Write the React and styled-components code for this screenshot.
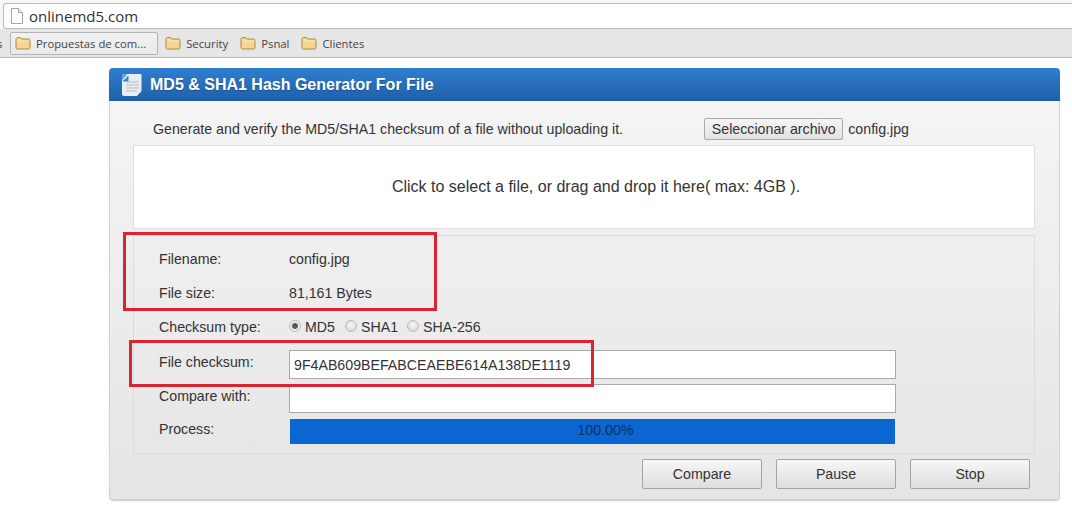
import React from 'react'
import styled, { createGlobalStyle } from 'styled-components'

const GlobalStyle = createGlobalStyle`
  html, body {
    margin: 0;
    padding: 0;
    background: #fff;
  }
  body {
    font-family: "Liberation Sans", Arial, sans-serif;
    font-size: 14.2px;
    color: #333;
  }
`

const bookmarks = [
  { name: 'Propuestas de com...', active: true, after: 6 },
  { name: 'Security', after: 10 },
  { name: 'Psnal', after: 10 },
  { name: 'Clientes', after: 0 },
]

const FolderIcon = () => (
  <svg width="16" height="14" viewBox="0 0 16 14">
    <path d="M1 3.5 C1 2.2 1.6 1.5 2.6 1.5 H5.6 L7 3 H13.6 C14.5 3 15 3.6 15 4.5 V11.5 C15 12.4 14.5 13 13.6 13 H2.4 C1.5 13 1 12.4 1 11.5 Z" fill="#f6d58e" stroke="#a98a4c" strokeWidth="1" />
    <path d="M2 5 H14" stroke="#fbe9c0" strokeWidth="1" />
  </svg>
)

const PageIcon = () => (
  <svg width="12" height="16" viewBox="0 0 12 16">
    <path d="M0.5 0.5 H7.5 L11.5 4.5 V15.5 H0.5 Z" fill="#fff" stroke="#a5a5a5" />
    <path d="M7.5 0.5 V4.5 H11.5" fill="#eee" stroke="#a5a5a5" />
  </svg>
)

const HashIcon = () => (
  <svg width="21" height="24" viewBox="0 0 21 24">
    <path d="M6 1 H19 C20 1 20.5 1.6 20.5 2.5 V18 L16 23 H3 C1.8 23 1 22.2 1 21 V7 Z" fill="#e9eef4" />
    <path d="M6 9 H18 M5 12 H18 M5 15 H18 M5 18 H16" stroke="#c3cad2" strokeWidth="1.4" />
    <path d="M1 1 H6 L1 7 Z" fill="#5fa8e6" />
    <path d="M7 3 V8 H2" fill="#3f86d0" stroke="#3f86d0" />
  </svg>
)

const rows = [
  { label: 'Filename:', value: 'config.jpg' },
  { label: 'File size:', value: '81,161 Bytes' },
]

const App = () => (
  <Page>
    <GlobalStyle />
    <Chrome>
      <AddressBar>
        <PageIcon />
        <Url>onlinemd5.com</Url>
      </AddressBar>
      <BookmarkBar>
        <Clipped>s</Clipped>
        {bookmarks.map((b) => (
          <Bookmark key={b.name} $active={b.active} $after={b.after}>
            <FolderIcon />
            {b.name}
          </Bookmark>
        ))}
      </BookmarkBar>
    </Chrome>

    <Panel>
      <PanelHeader>
        <HashIcon />
        <Title>MD5 &amp; SHA1 Hash Generator For File</Title>
      </PanelHeader>
      <PanelBody>
        <Intro>
          <span>Generate and verify the MD5/SHA1 checksum of a file without uploading it.</span>
          <FilePicker>
            <PickButton type="button">Seleccionar archivo</PickButton>
            config.jpg
          </FilePicker>
        </Intro>
        <DropZone>Click to select a file, or drag and drop it here( max: 4GB ).</DropZone>
        <Details>
          {rows.map((r) => (
            <Row key={r.label}>
              <Label>{r.label}</Label>
              <span>{r.value}</span>
            </Row>
          ))}
          <Row>
            <Label>Checksum type:</Label>
            <Radios>
              <RadioLabel $width={56}><Radio type="radio" name="hash" defaultChecked />MD5</RadioLabel>
              <RadioLabel $width={62}><Radio type="radio" name="hash" />SHA1</RadioLabel>
              <RadioLabel><Radio type="radio" name="hash" />SHA-256</RadioLabel>
            </Radios>
          </Row>
          <Row>
            <Label>File checksum:</Label>
            <TextBox readOnly value="9F4AB609BEFABCEAEBE614A138DE1119" />
          </Row>
          <Row>
            <Label>Compare with:</Label>
            <TextBox readOnly value="" />
          </Row>
          <Row>
            <Label>Process:</Label>
            <Progress>100.00%</Progress>
          </Row>
        </Details>
        <Actions>
          <ActionButton type="button">Compare</ActionButton>
          <ActionButton type="button">Pause</ActionButton>
          <ActionButton type="button">Stop</ActionButton>
        </Actions>
      </PanelBody>
    </Panel>

    <Highlight $left={123} $top={232} $width={314} $height={79} />
    <Highlight $left={129} $top={340} $width={465} $height={47} />
  </Page>
)

export default App

const Page = styled.div`
  position: relative;
  width: 1072px;
  height: 511px;
  overflow: hidden;
  background: #fff;
`

const Chrome = styled.div`
  padding-top: 3px;
  background: #f7f7f7;
`

const AddressBar = styled.div`
  display: flex;
  align-items: center;
  gap: 6px;
  height: 26px;
  margin-left: 3px;
  padding-left: 7px;
  background: #fff;
  border: 1px solid #bdbdbd;
  border-right: 0;
  border-radius: 3px 0 0 3px;
  box-sizing: border-box;
`

const Url = styled.span`
  font-family: "Open Sans", sans-serif;
  font-size: 15px;
  color: #333;
`

const BookmarkBar = styled.div`
  display: flex;
  align-items: center;
  height: 29px;
  background: #e6e6e6;
  border-bottom: 1px solid #b5b5b5;
  box-sizing: border-box;
`

const Clipped = styled.span`
  width: 13px;
  margin-left: -3px;
  font-family: "Open Sans", sans-serif;
  font-size: 11.3px;
  color: #444;
`

const Bookmark = styled.div`
  display: flex;
  align-items: center;
  gap: 5px;
  height: 23px;
  margin-right: ${(p) => p.$after}px;
  padding: ${(p) => (p.$active ? '0 11px 0 4px' : '0')};
  font-family: "Open Sans", sans-serif;
  font-size: 11.3px;
  color: #444;
  white-space: nowrap;
  box-sizing: border-box;
  border: 1px solid ${(p) => (p.$active ? '#b4b4b4' : 'transparent')};
  border-radius: 2px;
  background: ${(p) => (p.$active ? 'linear-gradient(#f2f2f2, #e9e9e9)' : 'none')};
`

const Panel = styled.section`
  width: 951px;
  margin: 10px 0 0 109px;
  border-radius: 4px;
  box-shadow: 0 1px 1px rgba(0, 0, 0, 0.2);
  overflow: hidden;
`

const PanelHeader = styled.header`
  display: flex;
  align-items: center;
  gap: 8px;
  height: 33px;
  padding-left: 12px;
  background: linear-gradient(#2f7fd0, #1f5fa9);
`

const Title = styled.h1`
  margin: 0;
  font-size: 16px;
  font-weight: bold;
  color: #fff;
  text-shadow: 0 1px 1px rgba(0, 0, 0, 0.25);
`

const PanelBody = styled.div`
  padding: 0 24px 10px 23px;
  background: linear-gradient(#f4f4f4, #e5e5e5);
  border: 1px solid #d2d2d2;
  border-top: 0;
  border-radius: 0 0 4px 4px;
`

const Intro = styled.div`
  display: flex;
  align-items: center;
  justify-content: space-between;
  height: 44px;
  padding: 12px 126px 0 20px;
  box-sizing: border-box;
`

const FilePicker = styled.div`
  display: flex;
  align-items: center;
  gap: 5px;
`

const PickButton = styled.button`
  width: 139px;
  height: 22px;
  padding: 0;
  font-family: inherit;
  font-size: 14.2px;
  color: #333;
  background: linear-gradient(#f5f5f5, #e2e2e2);
  border: 1px solid #a9a9a9;
  border-radius: 2px;
`

const DropZone = styled.div`
  display: flex;
  align-items: center;
  justify-content: center;
  height: 84px;
  padding: 0 0 1px 24px;
  box-sizing: border-box;
  background: #fff;
  border: 1px solid #dedede;
  font-size: 16px;
`

const Details = styled.div`
  display: grid;
  grid-auto-rows: 34px;
  margin-top: 6px;
  padding: 6px 0 7px 25px;
  border: 1px solid #dcdcdc;
`

const Row = styled.div`
  display: grid;
  grid-template-columns: 130px 1fr;
  align-items: center;
`

const Label = styled.span`
  color: #333;
`

const Radios = styled.div`
  display: flex;
  align-items: center;
`

const RadioLabel = styled.label`
  display: flex;
  align-items: center;
  width: ${(p) => (p.$width ? `${p.$width}px` : 'auto')};
`

const Radio = styled.input`
  appearance: none;
  width: 12px;
  height: 12px;
  margin: 0 4px 2px 0;
  border: 1px solid #bcbcbc;
  border-radius: 50%;
  background: radial-gradient(circle at 50% 40%, #f6f6f6, #d2d2d2);
  &:checked {
    background: radial-gradient(circle, #5a5a5a 0 2.5px, #eee 3.5px, #ddd 100%);
  }
`

const TextBox = styled.input`
  align-self: start;
  width: 607px;
  height: 29px;
  margin-top: 6px;
  padding: 0 4px;
  box-sizing: border-box;
  font-family: inherit;
  font-size: 14.2px;
  color: #333;
  background: #fff;
  border: 1px solid #a9a9a9;
  outline: none;
`

const Progress = styled.div`
  align-self: start;
  width: 605px;
  height: 25px;
  margin: 7px 0 0 1px;
  padding-left: 26px;
  box-sizing: border-box;
  line-height: 23px;
  text-align: center;
  color: #0e2f5c;
  background: #0966d2;
`

const Actions = styled.div`
  display: flex;
  justify-content: flex-end;
  gap: 14px;
  margin-top: 5px;
  padding-right: 5px;
`

const ActionButton = styled.button`
  width: 120px;
  height: 30px;
  padding: 0;
  font-family: inherit;
  font-size: 14.2px;
  color: #333;
  background: linear-gradient(#f6f6f6, #dedede);
  border: 1px solid #a3a3a3;
  border-radius: 2px;
`

const Highlight = styled.div`
  position: absolute;
  left: ${(p) => p.$left}px;
  top: ${(p) => p.$top}px;
  width: ${(p) => p.$width}px;
  height: ${(p) => p.$height}px;
  box-sizing: border-box;
  border: 3px solid #dc2330;
  pointer-events: none;
`
